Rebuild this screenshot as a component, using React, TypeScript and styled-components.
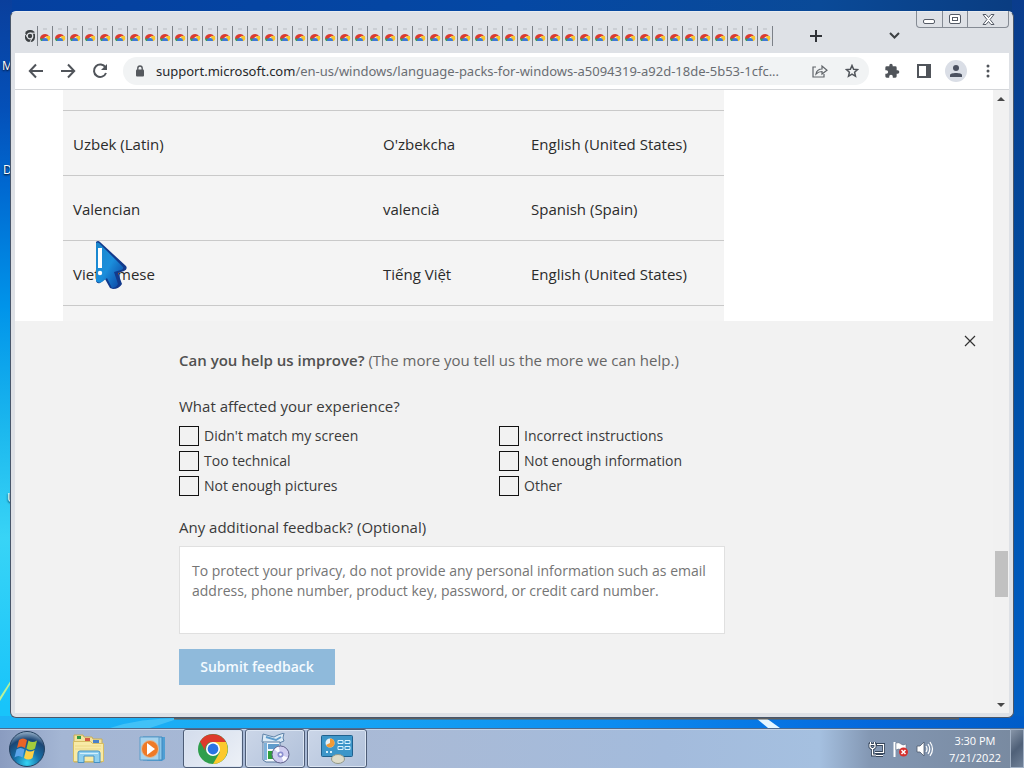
import React from "react";
import styled, { createGlobalStyle } from "styled-components";

const Global = createGlobalStyle`
  * { box-sizing: border-box; }
  html, body, #root { height: 100%; margin: 0; }
  body { font-family: "Open Sans", "Noto Sans", sans-serif; font-size: 15px; line-height: 20px; color: #2b2b2b; overflow: hidden; }
  button { font: inherit; border: 0; padding: 0; background: none; color: inherit; }
`;

const Desktop = styled.div`
  position: relative;
  display: flex;
  flex-direction: column;
  height: 100vh;
  background:
    linear-gradient(90deg, #1cb4f6 0%, #18a8f4 30%, #0c8cf0 60%, #0468dc 85%, #005cc8 100%) bottom / 100% 52px no-repeat,
    linear-gradient(#0a3f9c 0%, #0450b8 14%, #0068d0 24%, #0094ea 40%, #1cb8ee 56%, #38d4f6 70%, #18c4fa 92%) left / 12px 100% no-repeat,
    linear-gradient(#0a3c8c 0%, #004ca0 40%, #0062cc 100%) right / 12px 100% no-repeat,
    linear-gradient(90deg, #0540a0 0%, #0548a4 50%, #0a4a98 80%, #0a3c80 100%);
`;

const Wallpaper = styled.svg`
  position: absolute;
  left: 0;
  bottom: 0;
  width: 100%;
  height: 100px;
`;

const IconLabel = styled.span<{ $top: number; $left: number }>`
  position: absolute;
  top: ${(p) => p.$top}px;
  left: ${(p) => p.$left}px;
  font-size: 12px;
  line-height: 16px;
  color: #fff;
  text-shadow: 0 1px 2px #000;
`;

const Window = styled.main`
  position: relative;
  flex: 1;
  min-height: 0;
  display: flex;
  flex-direction: column;
  margin: 11px 10px 10px;
  padding: 0 4px 4px;
  border: 1px solid #48566a;
  border-top-color: #e8ecf0;
  border-radius: 6px;
  background: #dee1e6;
`;

const TabStrip = styled.header`
  display: flex;
  align-items: center;
  height: 41px;
  flex: none;
  padding: 6px 0 0 8px;
`;

const Tab = styled.button`
  width: 15px;
  height: 20px;
  flex: none;
  display: flex;
  align-items: center;
  justify-content: center;
  overflow: hidden;
  border-right: 1px solid #7c8188;
`;

const StripButton = styled.button<{ $gap: number }>`
  display: flex;
  margin-left: ${(p) => p.$gap}px;
`;

const Caption = styled.div`
  position: absolute;
  top: -1px;
  right: 4px;
  display: flex;
  height: 17px;
  border: 1px solid #858b94;
  border-top: 0;
  border-radius: 0 0 4px 4px;
`;

const CaptionButton = styled.button<{ $wide?: boolean }>`
  width: ${(p) => (p.$wide ? 41 : 25)}px;
  display: flex;
  align-items: center;
  justify-content: center;
  & + & { border-left: 1px solid #858b94; }
`;

const Toolbar = styled.nav`
  display: flex;
  align-items: center;
  height: 37px;
  flex: none;
  padding: 0 12px;
  background: #fff;
  border-bottom: 1px solid #d4d6d9;
`;

const NavButtons = styled.div`
  display: flex;
  gap: 14px;
`;

const ToolButton = styled.button`
  display: flex;
  align-items: center;
  justify-content: center;
  width: 18px;
  height: 18px;
  flex: none;
`;

const Address = styled.div`
  flex: 1;
  min-width: 0;
  display: flex;
  align-items: center;
  gap: 14px;
  height: 28px;
  margin: 0 14px;
  padding: 0 8px;
  border-radius: 14px;
  background: #f1f3f4;
`;

const Url = styled.a`
  flex: 1;
  min-width: 0;
  margin: 0 -7px;
  white-space: nowrap;
  font-family: "Noto Sans", "Open Sans", sans-serif;
  font-size: 13px;
  text-decoration: none;
  color: #6a6e73;
  b { font-weight: 400; color: #26282b; }
`;

const ToolActions = styled.div`
  display: flex;
  gap: 14px;
`;

const Avatar = styled(ToolButton)`
  width: 22px;
  height: 22px;
  margin: -2px;
  border-radius: 50%;
  background: #dadee6;
`;

const Viewport = styled.div`
  flex: 1;
  min-height: 0;
  display: flex;
  background: #f1f1f1;
`;

const Page = styled.div`
  flex: 1;
  min-width: 0;
  display: flex;
  flex-direction: column;
`;

const Article = styled.section`
  height: 231px;
  flex: none;
  overflow: hidden;
  padding-left: 48px;
  background: #fff;
`;

const Table = styled.table`
  width: 661px;
  table-layout: fixed;
  border-collapse: collapse;
  background: #f4f4f4;
`;

const Row = styled.tr<{ $height: number }>`
  height: ${(p) => p.$height}px;
  border-bottom: 1px solid #c9c9c9;
`;

const Cell = styled.td<{ $width?: number }>`
  width: ${(p) => (p.$width ? p.$width + "px" : "auto")};
  padding: 2px 10px 0;
`;

const Feedback = styled.form`
  position: relative;
  flex: 1;
  display: flex;
  flex-direction: column;
  align-items: flex-start;
  padding: 29px 24px 0 164px;
  background: #f2f2f2;
  color: #3a3a3a;
`;

const Dismiss = styled.button`
  position: absolute;
  top: 14px;
  right: 17px;
  display: flex;
`;

const Heading = styled.p`
  margin: 0 0 26px;
  color: #666;
  strong { font-weight: 600; color: #505050; }
`;

const Reasons = styled.fieldset`
  width: 640px;
  margin: 0 0 21px;
  padding: 0;
  border: 0;
  legend { padding: 0; margin-bottom: 10px; }
`;

const ReasonGrid = styled.div`
  display: grid;
  grid-template-columns: 1fr 1fr;
  row-gap: 5px;
`;

const Choice = styled.label`
  display: flex;
  align-items: center;
  gap: 5px;
  font-size: 14px;
`;

const Tick = styled.input`
  appearance: none;
  width: 20px;
  height: 20px;
  margin: 0;
  border: 1px solid #111;
`;

const Comment = styled.textarea`
  width: 546px;
  height: 88px;
  margin: 9px 0 15px;
  padding: 14px 12px;
  resize: none;
  border: 1px solid #e0e0e0;
  background: #fff;
  font: inherit;
  font-size: 14px;
  &::placeholder { color: #757575; opacity: 1; }
`;

const Submit = styled.button`
  width: 156px;
  height: 36px;
  background: #8fbadb;
  color: #f4fbff;
  font-size: 14px;
  font-weight: 600;
`;

const Scrollbar = styled.div`
  width: 16px;
  flex: none;
  display: flex;
  flex-direction: column;
  align-items: center;
  justify-content: space-between;
  padding: 7px 0 6px;
`;

const Thumb = styled.div`
  width: 13px;
  height: 46px;
  margin-top: 344px;
  background: #c1c1c1;
`;

const Taskbar = styled.footer`
  position: relative;
  height: 40px;
  flex: none;
  display: flex;
  align-items: stretch;
  border-top: 1px solid #4f6a8c;
  box-shadow: inset 0 1px #c4d4e8;
  background: linear-gradient(90deg, #8a9cc0 0%, #a4b6d4 6%, #a9bad6 40%, #a3bbdc 65%, #a5c0e0 80%, #8397b3 85%, #78899f 100%);
`;

const TaskButton = styled.button<{ $state?: "open" | "active"; $width: number }>`
  width: ${(p) => p.$width}px;
  display: flex;
  align-items: center;
  justify-content: center;
  border: 1px solid ${(p) => (p.$state ? "#4d5c76" : "transparent")};
  border-radius: 3px;
  box-shadow: ${(p) => (p.$state ? "inset 0 0 0 1px #dbe5f3" : "none")};
  background: ${(p) =>
    p.$state === "active" ? "linear-gradient(135deg, #d3dcec, #edf1f7)" : p.$state ? "linear-gradient(135deg, #cbd6e8, #b1c1da)" : "none"};
  & + & { margin-left: 2px; }
`;

const Tray = styled.div`
  flex: 1;
  display: flex;
  align-items: center;
  justify-content: flex-end;
  gap: 6px;
`;

const Clock = styled.time`
  margin: 0 3px 0 9px;
  font-size: 11px;
  line-height: 17px;
  text-align: center;
  color: #fff;
`;

const ShowDesktop = styled.button`
  width: 14px;
  align-self: stretch;
  border: 1px solid #a3b2c6;
  background: linear-gradient(135deg, #8795a8, #4f6078 50%, #708198);
`;

const Cursor = styled.svg`
  position: absolute;
  left: 95px;
  top: 240px;
  pointer-events: none;
`;

const ChromeMark = ({ size }: { size: number }) => (
  <svg width={size} height={size} viewBox="0 0 30 30">
    <circle cx="15" cy="15" r="15" fill="#2f9e4c" />
    <path d="M15 8h13a15 15 0 0 1-13 22l7-12Z" fill="#fcc92c" />
    <path d="M2 7.500A15 15 0 0 1 28 8H15a7 7 0 0 0-6.500 11Z" fill="#dd3a2c" />
    <circle cx="15" cy="15" r="7" fill="#fff" />
    <circle cx="15" cy="15" r="5.400" fill="#2a74e4" />
  </svg>
);

const TabMark = () => (
  <svg width="12" height="18" viewBox="0 0 12 18">
    <path d="M4 2h4" stroke="#b9bcc1" />
    <path d="M1 12a5 5 0 0 1 9-3l-4 1-2 3Z" fill="#db3b30" />
    <path d="M7 9h4a5 5 0 0 1-1 5H8Z" fill="#f7c52e" />
    <path d="M1 12l2-1 2 3H2Z" fill="#37a150" />
    <path d="M3 14a3 3 0 0 1 6 0Z" fill="#3e79d6" />
  </svg>
);

const FirstTabMark = () => (
  <svg width="12" height="14" viewBox="0 0 12 14">
    <rect x="1" y="1" width="10" height="12" rx="4.500" fill="#3c4043" />
    <circle cx="6" cy="7" r="2.800" fill="#3c4043" stroke="#e2e4e8" strokeWidth="1.200" />
    <path d="M6 4.200h5M3.600 8.400 1 4.500M8.400 8.400 6 13" stroke="#e2e4e8" />
  </svg>
);

const line = { fill: "none", stroke: "#50545a", strokeWidth: 2 };

const rows = [
  ["Uzbek (Latin)", "O'zbekcha", "English (United States)"],
  ["Valencian", "valencià", "Spanish (Spain)"],
  ["Vietnamese", "Tiếng Việt", "English (United States)"],
];

const reasons = [
  "Didn't match my screen", "Incorrect instructions",
  "Too technical", "Not enough information",
  "Not enough pictures", "Other",
];

export default function App() {
  return (
    <Desktop>
      <Global />
      <Wallpaper viewBox="0 0 1024 100" preserveAspectRatio="none" aria-hidden="true">
        <path d="M0 29 11 12v3L0 33Z" fill="#b8f29a" />
        <path d="M110 60Q140 50 180 50L150 60Z" fill="#5ccdf8" opacity=".6" />
        <path d="M756 50h10l14 10h-12Z" fill="#e4f6ff" />
        <path d="M174 50.500h785" stroke="#5f5d5c" strokeWidth="2" />
      </Wallpaper>
      <IconLabel $top={58} $left={2}>M</IconLabel>
      <IconLabel $top={162} $left={3}>D</IconLabel>
      <IconLabel $top={490} $left={7}>U</IconLabel>

      <Window>
        <TabStrip>
          <Tab aria-label="Tab 1"><FirstTabMark /></Tab>
          {Array.from({ length: 49 }, (_, i) => (
            <Tab key={i} aria-label={`Tab ${i + 2}`}><TabMark /></Tab>
          ))}
          <StripButton $gap={37} aria-label="New tab">
            <svg width="12" height="12" viewBox="0 0 12 12"><path d="M6 0v12M0 6h12" {...line} stroke="#303338" /></svg>
          </StripButton>
          <StripButton $gap={67} aria-label="Search tabs">
            <svg width="11" height="7" viewBox="0 0 11 7"><path d="m1 1 4.500 4.500L10 1" {...line} stroke="#3c4043" /></svg>
          </StripButton>
        </TabStrip>
        <Caption>
          <CaptionButton aria-label="Minimize">
            <svg width="13" height="9" viewBox="0 0 13 9"><rect x=".5" y="4.500" width="11" height="4" rx="1.500" fill="#fff" stroke="#555b66" /></svg>
          </CaptionButton>
          <CaptionButton aria-label="Maximize">
            <svg width="12" height="10" viewBox="0 0 12 10"><rect x=".5" y=".5" width="11" height="9" rx="1.500" fill="#fff" stroke="#555b66" /><rect x="3.500" y="3.500" width="5" height="3" fill="#fff" stroke="#555b66" /></svg>
          </CaptionButton>
          <CaptionButton $wide aria-label="Close window">
            <svg width="13" height="11" viewBox="0 0 13 11"><path d="M1 .5h3l2.500 3 2.500-3h3L8 5.500l4 5H9l-2.500-3-2.500 3H1l4-5Z" fill="#fff" stroke="#555b66" /></svg>
          </CaptionButton>
        </Caption>

        <Toolbar>
          <NavButtons>
            <ToolButton aria-label="Back"><svg width="16" height="16" viewBox="0 0 16 16"><path d="M15 8H2M8 1.500 1.800 8 8 14.500" {...line} /></svg></ToolButton>
            <ToolButton aria-label="Forward"><svg width="16" height="16" viewBox="0 0 16 16"><path d="M1 8h13M8 1.500 14.200 8 8 14.500" {...line} /></svg></ToolButton>
            <ToolButton aria-label="Reload"><svg width="16" height="16" viewBox="0 0 16 16"><path d="M13.500 4.500A6.200 6.200 0 1 0 14 10" {...line} /><path d="M15 1v6H9Z" fill="#50545a" /></svg></ToolButton>
          </NavButtons>
          <Address>
            <ToolButton aria-label="Site information"><svg width="10" height="12" viewBox="0 0 10 12"><rect x="1" y="4.500" width="8" height="7" rx="1" fill="#55595e" /><path d="M2.800 5V3.200a2.200 2.200 0 0 1 4.400 0V5" fill="none" stroke="#55595e" strokeWidth="1.400" /></svg></ToolButton>
            <Url href="#top"><b>support.microsoft.com</b>/en-us/windows/language-packs-for-windows-a5094319-a92d-18de-5b53-1cfc...</Url>
            <ToolButton aria-label="Share"><svg width="16" height="14" viewBox="0 0 16 14"><path d="M4 3H1v10h11v-3M4 10c.5-3 2.500-5 6-5V2l5 4.200L10 10V7.500C7.500 7.500 6 8 4 10Z" fill="none" stroke="#606469" strokeWidth="1.200" /></svg></ToolButton>
            <ToolButton aria-label="Bookmark"><svg width="14" height="14" viewBox="0 0 14 14"><path d="m7 1.500 1.600 3.700 4 .4-3 2.700.9 4L7 10.200l-3.500 2.100.9-4-3-2.700 4-.4Z" fill="none" stroke="#50545a" strokeWidth="1.500" /></svg></ToolButton>
          </Address>
          <ToolActions>
            <ToolButton aria-label="Extensions"><svg width="16" height="16" viewBox="0 0 24 24"><path fill="#50545a" d="M20.500 11H19V7a2 2 0 0 0-2-2h-4V3.500a2.500 2.500 0 0 0-5 0V5H4a2 2 0 0 0-2 2v3.800h1.500a2.700 2.700 0 0 1 0 5.400H2V20a2 2 0 0 0 2 2h3.800v-1.500a2.700 2.700 0 0 1 5.400 0V22H17a2 2 0 0 0 2-2v-4h1.500a2.500 2.500 0 0 0 0-5Z" /></svg></ToolButton>
            <ToolButton aria-label="Side panel"><svg width="14" height="14" viewBox="0 0 14 14"><rect x="1" y="1" width="12" height="12" {...line} /><path d="M9 1h4v12H9Z" fill="#50545a" /></svg></ToolButton>
            <Avatar aria-label="Profile"><svg width="14" height="14" viewBox="0 0 14 14"><circle cx="7" cy="4" r="3" fill="#4b5160" /><path d="M1 13v-2c0-2.700 12-2.700 12 0v2Z" fill="#4b5160" /></svg></Avatar>
            <ToolButton aria-label="Menu"><svg width="4" height="14" viewBox="0 0 4 14"><g fill="#50545a"><circle cx="2" cy="2" r="1.500" /><circle cx="2" cy="7" r="1.500" /><circle cx="2" cy="12" r="1.500" /></g></svg></ToolButton>
          </ToolActions>
        </Toolbar>

        <Viewport>
          <Page>
            <Article>
              <Table>
                <tbody>
                  <Row $height={20}><Cell $width={310} /><Cell $width={148} /><Cell /></Row>
                  {rows.map((r) => (
                    <Row key={r[0]} $height={65}>{r.map((c) => <Cell key={c}>{c}</Cell>)}</Row>
                  ))}
                  <Row $height={65}><Cell /><Cell /><Cell /></Row>
                </tbody>
              </Table>
            </Article>
            <Feedback>
              <Dismiss type="button" aria-label="Dismiss feedback">
                <svg width="12" height="12" viewBox="0 0 12 12"><path d="m1 1 10 10M11 1 1 11" fill="none" stroke="#333" strokeWidth="1.200" /></svg>
              </Dismiss>
              <Heading><strong>Can you help us improve?</strong> (The more you tell us the more we can help.)</Heading>
              <Reasons>
                <legend>What affected your experience?</legend>
                <ReasonGrid>
                  {reasons.map((r) => <Choice key={r}><Tick type="checkbox" />{r}</Choice>)}
                </ReasonGrid>
              </Reasons>
              <label htmlFor="comment">Any additional feedback? (Optional)</label>
              <Comment id="comment" placeholder="To protect your privacy, do not provide any personal information such as email address, phone number, product key, password, or credit card number." />
              <Submit type="button">Submit feedback</Submit>
            </Feedback>
          </Page>
          <Scrollbar>
            <svg width="8" height="4" viewBox="0 0 8 4"><path d="m0 4 4-4 4 4Z" fill="#484848" /></svg>
            <Thumb />
            <svg width="8" height="4" viewBox="0 0 8 4"><path d="m0 0 4 4 4-4Z" fill="#484848" /></svg>
          </Scrollbar>
        </Viewport>
      </Window>

      <Taskbar>
        <TaskButton $width={53} aria-label="Start">
          <svg width="38" height="38" viewBox="0 0 38 38">
            <defs><radialGradient id="orb" cx=".5" cy=".9" r=".9"><stop offset="0" stopColor="#35d4f4" /><stop offset=".4" stopColor="#1670a8" /><stop offset=".75" stopColor="#1c4674" /><stop offset="1" stopColor="#9ab4cc" /></radialGradient></defs>
            <circle cx="19" cy="19" r="17.500" fill="url(#orb)" stroke="#24405f" />
            <path d="M11 10q4-3 8 0l-2 8q-4-3-8 0Z" fill="#ea6427" />
            <path d="M20.500 10.500q4 3 8.500 0l-2 8q-4 3-8.500 0Z" fill="#a4cb3c" />
            <path d="M8.500 19.500q4-3 8 0l-2 8q-4-3-8 0Z" fill="#5ba4ea" />
            <path d="M18 20q4 3 8.500 0l-2 8q-4 3-8.500 0Z" fill="#fcd046" />
          </svg>
        </TaskButton>
        <TaskButton $width={67} aria-label="Explorer">
          <svg width="34" height="30" viewBox="0 0 34 30">
            <path d="M2 1h9l1 2h8l1 2h9v23H2Z" fill="#f3e3a0" stroke="#c9ae55" />
            <path d="M5 2h4v3H5Z" fill="#2f9a44" /><path d="M13 4h5v3h-5Z" fill="#d65a42" /><path d="M21 6h6v3h-6Z" fill="#4980c8" />
            <path d="M1.500 7.500h17l2 2h11v18h-30Z" fill="#f8eaa6" stroke="#d6bd62" />
            <path d="M3 12h26M3 15h26" stroke="#ecd887" />
            <path d="M6 28.500V19q0-2 2-2h18q2 0 2 2v9.500h-6V22H12v6.500Z" fill="#8fcfee" stroke="#4590c4" />
            <path d="M8 19.500h18" stroke="#d4effb" />
          </svg>
        </TaskButton>
        <TaskButton $width={57} aria-label="Media Player">
          <svg width="28" height="26" viewBox="0 0 28 26">
            <path d="M8 1h18v22l-3 2H8Z" fill="#4f9fd4" /><path d="M4 1h19v23H4Z" fill="#8cc6e8" stroke="#3f88be" /><path d="M1 1h19v23H1Z" fill="#a6d3ed" stroke="#5b9cc9" />
            <circle cx="11" cy="13" r="8.500" fill="#ef7a26" stroke="#d9bda0" /><path d="m8 7 8 6-8 6Z" fill="#fff" />
          </svg>
        </TaskButton>
        <TaskButton $width={60} $state="active" aria-label="Chrome"><ChromeMark size={30} /></TaskButton>
        <TaskButton $width={60} $state="open" aria-label="Installer">
          <svg width="30" height="32" viewBox="0 0 30 32">
            <path d="m2 9 1-8 7 2 4 1 4-2 6-2-1 5 1 3-5 2H6Z" fill="#dcebf7" stroke="#5f83a8" />
            <path d="m6 4 10 3 5-3" fill="none" stroke="#5f9ccc" strokeWidth="2" />
            <path d="M3 9h17v20H6l-3-2Z" fill="#f2f7fc" stroke="#55779d" />
            <path d="M8 11h11v5H8Z" fill="#5f9ccc" /><path d="M4 10h3v17H4Z" fill="#7fb2da" /><path d="M8 18h6v8H8Z" fill="#2f9f3c" />
            <circle cx="20.500" cy="21.500" r="8.500" fill="#cfcdf0" stroke="#5f6089" />
            <path d="m20.500 21.500-6-5a8 8 0 0 1 4-3Zm0 0 7 3a8 8 0 0 1-4 4Z" fill="#fbfbff" />
            <circle cx="20.500" cy="21.500" r="3" fill="#8b8fd0" /><circle cx="20.500" cy="21.500" r="1.300" fill="#fff" />
          </svg>
        </TaskButton>
        <TaskButton $width={60} $state="open" aria-label="Control Panel">
          <svg width="32" height="30" viewBox="0 0 32 30">
            <rect x=".5" y="1.500" width="31" height="21" rx="1" fill="#3d96c9" stroke="#20618e" /><circle cx="9" cy="9" r="4.500" fill="#e7f1f6" /><path d="M9 9V4.500A4.500 4.500 0 1 1 5 11Z" fill="#f19a35" />
            <path d="M17 6.500h5v3h-5Zm7 0h5v3h-5Zm-7 6h5v3h-5Zm7 0h5v3h-5Z" fill="#3a93c8" stroke="#d8f2fd" /><path d="M5 18h2m2 0h2" stroke="#d8effa" strokeWidth="2" /><ellipse cx="17" cy="25" rx="6.500" ry="4.500" fill="#dedcc9" stroke="#929888" />
          </svg>
        </TaskButton>
        <Tray>
          <svg width="18" height="16" viewBox="0 0 18 16"><g fill="none" stroke="#37475c" strokeWidth="3"><path d="M7 3.500h8.500v8H7M8 14.500h7M4.500 7v7H8M2.500 1v3M6.500 1v3M2 3.500h5V6L5.500 7.500h-2L2 6Z" /></g><g fill="none" stroke="#fff" strokeWidth="1.200"><path d="M9 3.500h6.500v8H7M8 14.500h7M4.500 7v7H8M2.500 1v3M6.500 1v3M2 3.500h5V6L5.500 7.500h-2L2 6Z" /></g></svg>
          <svg width="18" height="16" viewBox="0 0 18 16"><path d="M2.500 1v15" stroke="#fff" strokeWidth="2" /><path d="M4 2q3-1 5 1t5 0v7q-3 1-5-1T4 9Z" fill="#fff" stroke="#59677a" strokeWidth=".5" /><circle cx="11.500" cy="11" r="4.500" fill="#d5302e" /><path d="m9.500 9 4 4m0-4-4 4" stroke="#fff" strokeWidth="1.500" /></svg>
          <svg width="18" height="16" viewBox="0 0 18 16"><path d="M1 5h3l4-4v14l-4-4H1Z" fill="#fff" stroke="#4b596c" strokeWidth=".8" /><path d="M10 5q2 3 0 6M12 3q3.500 5 0 10M14 1q5 7 0 14" fill="none" stroke="#fff" strokeWidth="1.200" /></svg>
          <Clock dateTime="2022-07-21T15:30">3:30 PM<br />7/21/2022</Clock>
          <ShowDesktop aria-label="Show desktop" />
        </Tray>
      </Taskbar>

      <Cursor width="34" height="50" viewBox="0 0 34 50" aria-hidden="true">
        <defs><linearGradient id="arrow" x1="0" y1="0" x2="1" y2="1"><stop offset="0" stopColor="#1a86cc" /><stop offset=".5" stopColor="#1b8edb" /><stop offset="1" stopColor="#0a3c9c" /></linearGradient></defs>
        <path d="M1 2q2-2 4 0l26 24q2 3-2 5l-6 2 4 11q-3 5-9 5l-3-1-5-9-5 4q-3 1-4-2Z" fill="#123a8c" />
        <path d="M1 3q1-1 3 0l24 24q1 2-2 3l-7 2 4 12q-2 4-6 4l-5-10-5 4q-3 2-6-1Z" fill="url(#arrow)" />
        <path d="M5 8v20" stroke="#fff" strokeWidth="4" /><circle cx="5" cy="33" r="2.200" fill="#fff" />
      </Cursor>
    </Desktop>
  );
}
